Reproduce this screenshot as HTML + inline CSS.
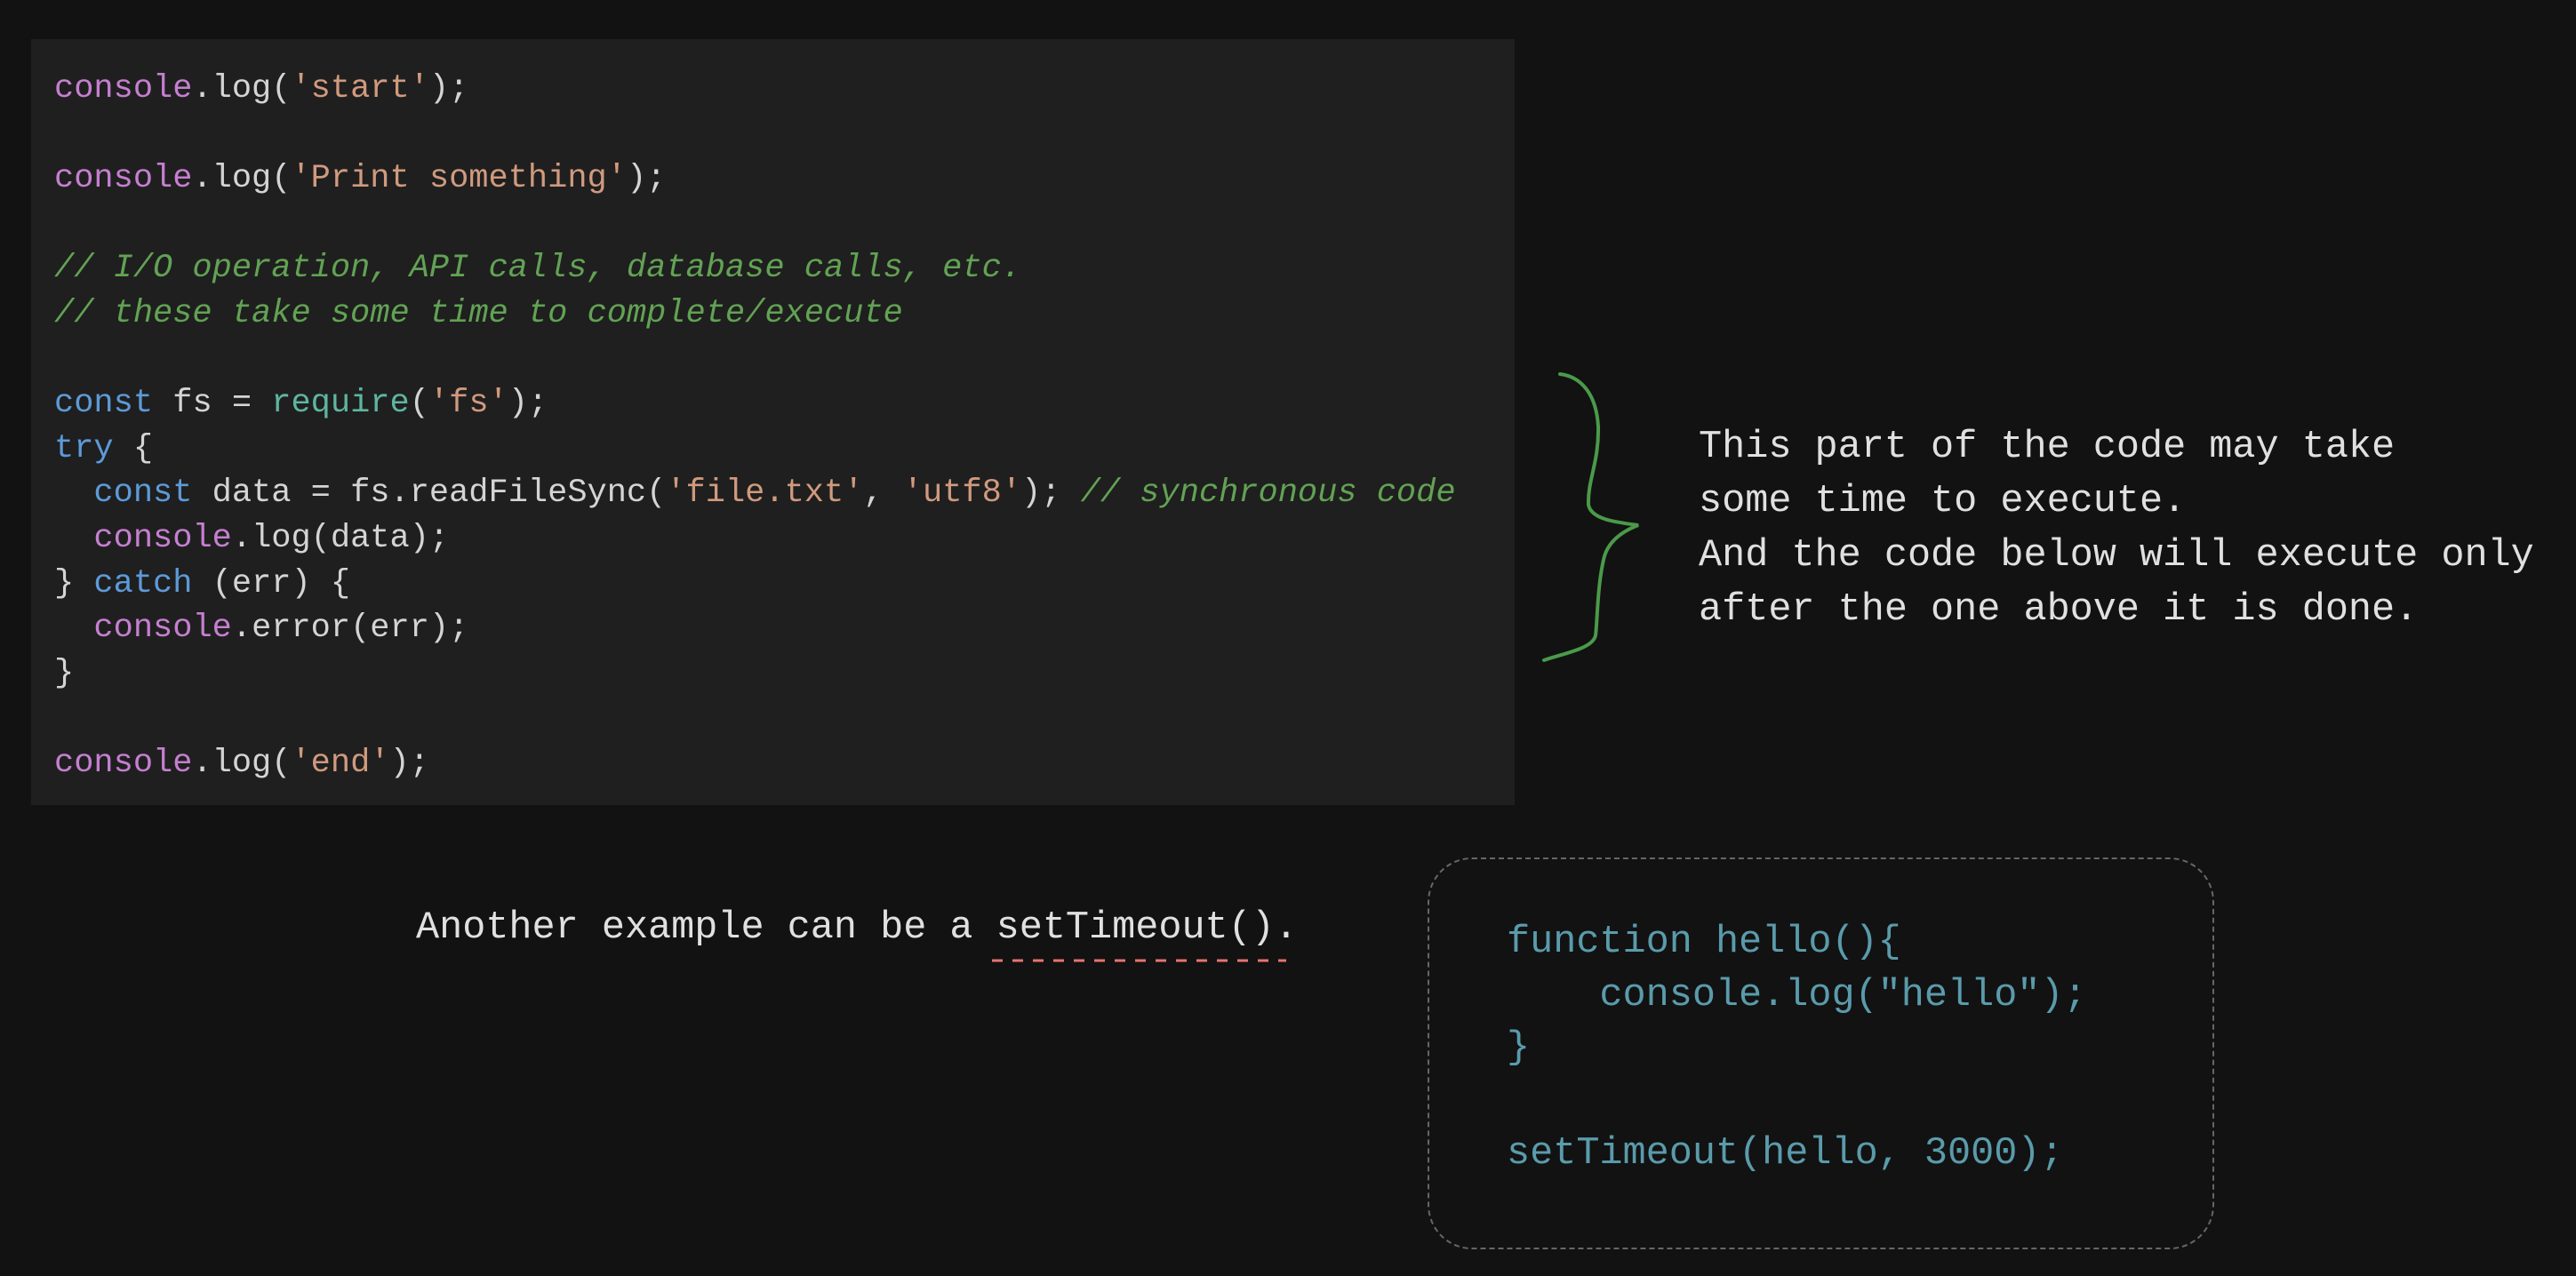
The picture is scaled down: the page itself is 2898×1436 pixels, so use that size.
<!DOCTYPE html>
<html><head><meta charset="utf-8"><style>
html,body{margin:0;padding:0;background:#121212;width:2898px;height:1436px;overflow:hidden;position:relative}
.panel{position:absolute;left:35px;top:44px;width:1669px;height:862px;background:#1f1f1f}
pre{margin:0;font-family:"Liberation Mono",monospace}
.code{position:absolute;left:61px;top:75px;font-size:37px;line-height:50.6px;color:#d4d4d4}
.p{color:#c57fd0}.s{color:#d09a7e}.c{color:#62a254;font-style:italic}.k{color:#5d9ad8}.f{color:#5fb5a0}
.note{position:absolute;left:1911px;top:473px;font-size:43.5px;line-height:61px;color:#e0e0e0}
.another{position:absolute;left:468px;top:1014px;font-size:43.5px;line-height:61px;color:#e0e0e0}
.box{position:absolute;left:1606px;top:965px;width:885px;height:441px;border:2px dashed #666;border-radius:50px;box-sizing:border-box}
.bcode{position:absolute;left:1695px;top:1031px;font-size:43.5px;line-height:59.5px;color:#5a9bab}
</style></head><body>
<div class="panel"></div>
<pre class="code"><span class="p">console</span>.log(<span class="s">'start'</span>);

<span class="p">console</span>.log(<span class="s">'Print something'</span>);

<span class="c">// I/O operation, API calls, database calls, etc.</span>
<span class="c">// these take some time to complete/execute</span>

<span class="k">const</span> fs = <span class="f">require</span>(<span class="s">'fs'</span>);
<span class="k">try</span> {
  <span class="k">const</span> data = fs.readFileSync(<span class="s">'file.txt'</span>, <span class="s">'utf8'</span>); <span class="c">// synchronous code</span>
  <span class="p">console</span>.log(data);
} <span class="k">catch</span> (err) {
  <span class="p">console</span>.error(err);
}

<span class="p">console</span>.log(<span class="s">'end'</span>);</pre>
<svg style="position:absolute;left:0;top:0" width="2898" height="1436">
<path d="M1755 421 C1780 424 1796 445 1798 480 C1799 520 1786 540 1787 568 C1790 585 1820 588 1843 591 C1825 598 1808 610 1804 630 C1797 660 1797 700 1795 715 C1792 730 1760 735 1737 743" fill="none" stroke="#4a9a4a" stroke-width="4" stroke-linecap="round"/>
<line x1="1116" y1="1081" x2="1447" y2="1081" stroke="#e8736f" stroke-width="3" stroke-dasharray="12 11"/>
</svg>
<pre class="note">This part of the code may take
some time to execute.
And the code below will execute only
after the one above it is done.</pre>
<pre class="another">Another example can be a setTimeout().</pre>
<div class="box"></div>
<pre class="bcode">function hello(){
    console.log("hello");
}

setTimeout(hello, 3000);</pre>
</body></html>
